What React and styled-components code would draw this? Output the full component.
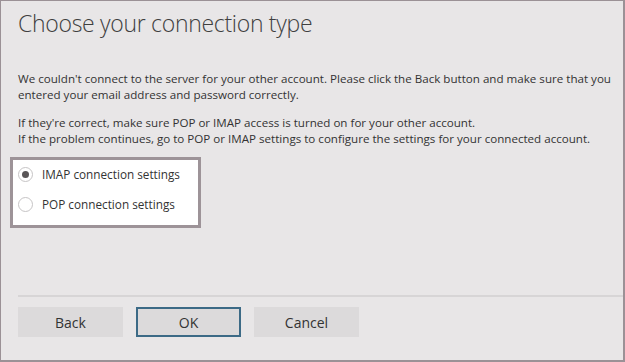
import React, { useState } from 'react';
import styled, { createGlobalStyle } from 'styled-components';

const GlobalStyle = createGlobalStyle`
  html, body {
    margin: 0;
    padding: 0;
    background: #e8e6e7;
  }
  * {
    box-sizing: border-box;
  }
`;

const options = [
  { id: 'imap', label: 'IMAP connection settings' },
  { id: 'pop', label: 'POP connection settings' },
];

const App = () => {
  const [selected, setSelected] = useState('imap');

  return (
    <>
      <GlobalStyle />
      <Frame>
        <Title>Choose your connection type</Title>
        <Message>
          We couldn't connect to the server for your other account. Please click the Back button and make sure that you
          entered your email address and password correctly.
        </Message>
        <Message>
          If they're correct, make sure POP or IMAP access is turned on for your other account.
          <br />
          If the problem continues, go to POP or IMAP settings to configure the settings for your connected account.
        </Message>
        <OptionBox>
          {options.map((opt) => (
            <OptionRow key={opt.id} onClick={() => setSelected(opt.id)}>
              <RadioCircle $checked={selected === opt.id} />
              <OptionLabel>{opt.label}</OptionLabel>
            </OptionRow>
          ))}
        </OptionBox>
        <Footer>
          <Separator />
          <ButtonRow>
            <DialogButton>Back</DialogButton>
            <DialogButton $primary>OK</DialogButton>
            <DialogButton>Cancel</DialogButton>
          </ButtonRow>
        </Footer>
      </Frame>
    </>
  );
};

const Frame = styled.div`
  width: 625px;
  height: 362px;
  display: flex;
  flex-direction: column;
  background: #e8e6e7;
  border-style: solid;
  border-color: #9b9196;
  border-width: 1px 2px 2px 1px;
  font-family: 'Open Sans', 'Noto Sans', sans-serif;
  color: #333;
`;

const Title = styled.h1`
  margin: 0;
  padding: 5px 17px 0;
  font-size: 23px;
  letter-spacing: -0.3px;
  line-height: 34px;
  font-weight: 300;
  color: #3f3f3f;
`;

const Message = styled.p`
  margin: 0;
  padding: 0 4px 0 17px;
  font-size: 11.6px;
  line-height: 16px;
  color: #333;

  &:first-of-type {
    margin-top: 31px;
  }

  & + & {
    margin-top: 12px;
  }
`;

const OptionBox = styled.div`
  margin: 10px 0 0 9px;
  width: 191px;
  height: 71px;
  background: #fff;
  border: 3px solid #9d9398;
  padding: 4px 0 0 5px;
  display: flex;
  flex-direction: column;
  gap: 10px;
`;

const OptionRow = styled.label`
  display: flex;
  align-items: center;
  gap: 9px;
  height: 20px;
  cursor: pointer;
`;

const RadioCircle = styled.span`
  width: 15px;
  height: 15px;
  border-radius: 50%;
  border: 1px solid #c6c4c5;
  background: #fff;
  display: flex;
  align-items: center;
  justify-content: center;

  &::after {
    content: '';
    width: 7px;
    height: 7px;
    border-radius: 50%;
    background: ${(p) => (p.$checked ? '#5a5658' : 'transparent')};
  }
`;

const OptionLabel = styled.span`
  font-size: 11.75px;
  color: #333;
`;

const Footer = styled.div`
  margin-top: auto;
  padding-bottom: 23px;
`;

const Separator = styled.div`
  margin-left: 17px;
  height: 2px;
  background: #d7d5d6;
`;

const ButtonRow = styled.div`
  display: flex;
  gap: 13px;
  padding: 10px 17px 0;
`;

const DialogButton = styled.button`
  width: 105px;
  height: 30px;
  background: #dcdadb;
  border: 2px solid ${(p) => (p.$primary ? '#3c6a86' : '#dcdadb')};
  font-family: 'Open Sans', 'Noto Sans', sans-serif;
  font-size: 14px;
  color: #333;
  cursor: pointer;
  padding: 0;
`;

export default App;
